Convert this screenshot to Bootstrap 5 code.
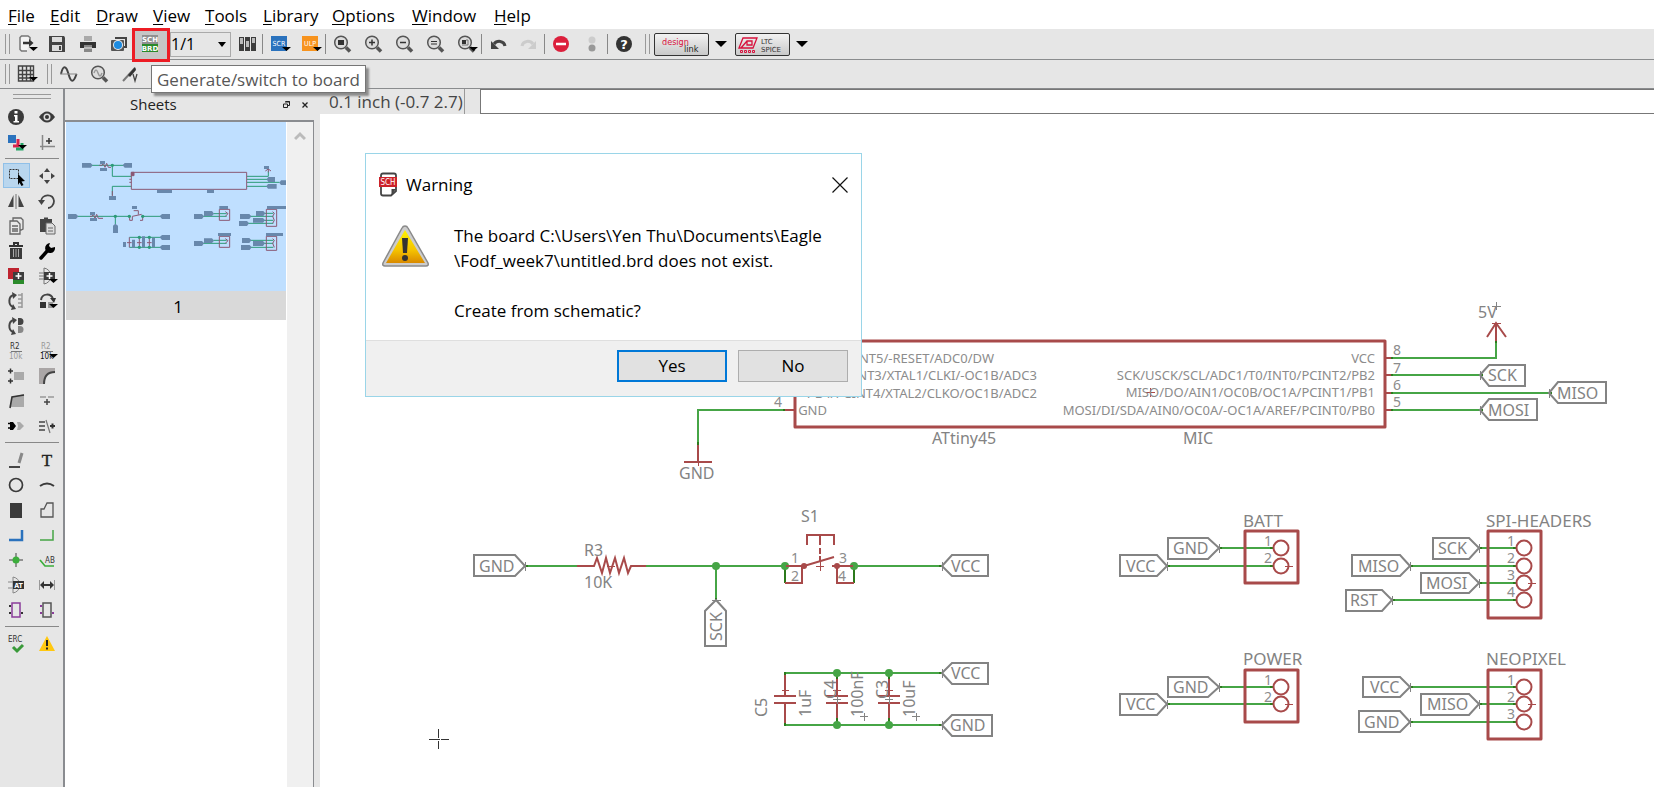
<!DOCTYPE html>
<html lang="en">
<head>
<meta charset="utf-8">
<meta name="viewport" content="width=device-width, initial-scale=1">
<title>Schematic editor</title>
<link href="https://cdn.jsdelivr.net/npm/bootstrap@5.3.0/dist/css/bootstrap.min.css" rel="stylesheet">
<style>
  :root { --chrome:#e6e6e6; --rule:#8a8c8e; --ink:#404040; --net:#46a546; --part:#a84a4a; --label:#838383; }
  body { font:17px/24px "Open Sans","Noto Sans",sans-serif; color:#000; background:#fff; }
  svg { display:block; }
  .menu-row { height:29px; padding:2px 0 0 8px; display:grid; grid-template-columns:42px 46px 57px 52px 58px 69px 80px 82px auto; justify-content:start; align-items:center; }
  .menu-row a { color:#000; text-decoration:none; }
  .menu-row u { text-underline-offset:2px; }
  .tool-row { background:var(--chrome); border-bottom:1px solid var(--rule); height:31px; padding-left:5px; }
  .tool-row.second { height:29px; }
  .tool { border:0; background:none; padding:0; width:31px; height:25px; display:flex; align-items:center; justify-content:center; position:relative; flex:none; color:var(--ink); }
  .grip { width:5px; height:20px; border:solid #999; border-width:0 1px; flex:none; }
  .grip.gap { margin-left:6px; }
  .vsep { width:1px; height:20px; background:#888; flex:none; }
  .tool.hot::before { content:""; position:absolute; inset:-4px -5px -5px -2px; background:#c6c6c6; border:3px solid #ed1c24; z-index:2; }
  .tool.hot svg { position:relative; z-index:3; }
  .tip { position:absolute; left:17px; top:33px; z-index:5; background:#fff; border:1px solid #767676; box-shadow:3px 3px 2px #8c8c8c; color:#575757; white-space:nowrap; padding:0 5px; height:28px; line-height:28px; }
  .sheet-pick { position:relative; margin-left:5px; width:61px; height:25px; flex:none; }
  .sheet-pick select { appearance:none; width:100%; height:100%; border:1px solid #aaa; background:var(--chrome); font-size:16px; line-height:22px; padding:0; border-radius:0; color:#000; }
  .sheet-pick::after, .drop { content:""; width:0; height:0; border:6px solid transparent; border-bottom:0; border-top-color:#000; }
  .sheet-pick::after { position:absolute; right:5px; top:10px; border-width:5px 4px 0; pointer-events:none; }
  .drop { padding:0; background:none; margin:0 8px 0 6px; flex:none; }
  .brandbtn { width:55px; height:23px; border:1px solid #333; border-radius:2px; background:linear-gradient(#f2f2f2,#c9c9c9); padding:0; flex:none; }
  .workspace { display:flex; height:calc(100vh - 89px); min-height:560px; }
  .palette { width:65px; background:var(--chrome); border-right:2px solid #8a8c90; flex:none; padding-top:5px; }
  .palette .pgrip { height:5px; width:38px; border:solid #999; border-width:1px 0; margin:0 auto 5px 13px; }
  .palette .pair { display:flex; }
  .palette hr { margin:4px 4px 4px 5px; border:0; height:1px; background:#888; opacity:1; }
  .palette .on { background:#b9d6ee; outline:1px solid #90c0e8; outline-offset:-1px; width:27px; margin:0 1px 0 3px; }
  .sheets { width:249px; background:var(--chrome); flex:none; display:flex; flex-direction:column; }
  .sheets h2 { font-size:15px; line-height:31px; margin:0; color:#222; font-weight:400; height:31px; display:flex; align-items:center; padding-left:65px; }
  .sheets h2 button { border:0; background:none; padding:0; width:18px; height:16px; display:flex; align-items:center; justify-content:center; }
  .sheets-list { flex:1; background:#fff; border-top:2px solid #8a8c90; border-right:1px solid #8a8c90; display:flex; }
  .thumb { width:220px; margin:0 1px; }
  .thumb figcaption { background:#d9d9d9; height:29px; line-height:32px; padding-left:4px; text-align:center; }
  .scroller { flex:1; background:#f0f0f0; padding-top:9px; display:flex; justify-content:center; align-items:start; }
  .editor { flex:1; min-width:0; background:#fff; display:flex; flex-direction:column; position:relative; }
  .gutter { width:6px; background:var(--chrome); flex:none; }
  .cmd { background:var(--chrome); height:25px; display:flex; }
  .coord { width:145px; border-right:1px solid #999; line-height:25px; padding-left:9px; color:#444; white-space:nowrap; flex:none; }
  .cmd input { flex:1; margin-left:15px; border:1px solid #777; border-right:0; border-radius:0; background:#fff; min-width:0; padding:0 4px; height:25px; }
  .sheet-area { flex:1; min-height:0; overflow:hidden; }
  .sheet-area svg { width:100%; height:100%; font-family:"Noto Sans",sans-serif; }
  .net { stroke:var(--net); stroke-width:2; fill:none; }
  .joint { fill:var(--net); stroke:none; }
  .end { stroke:#2c7a1c; stroke-width:2; fill:none; }
  .sym { stroke:var(--part); stroke-width:2; fill:none; }
  .box { stroke:var(--part); stroke-width:3; fill:none; stroke-linejoin:round; }
  .fine { stroke:var(--part); stroke-width:1; fill:none; }
  .finegray { stroke:var(--label); stroke-width:1; fill:none; }
  .tagline { stroke:var(--label); stroke-width:2; fill:none; }
  .t13 { font-size:13px; fill:#8c8c8c; } .t14 { font-size:14px; fill:#8c8c8c; } .t16 { font-size:16px; fill:var(--label); } .t17 { font-size:17px; fill:var(--label); }
  .warnbox { position:absolute; left:45px; top:64px; width:497px; background:#fff; border:1px solid #9ad5e8; z-index:4; }
  .warnbox header { height:61px; padding:0 13px 0 12px; }
  .warnbox .copy { padding:8px 12px 0 15px; gap:23px; height:125px; }
  .warnbox p { margin:0; line-height:25px; }
  .warnbox footer { background:#f0f0f0; border-top:1px solid #dfdfdf; height:56px; padding:0 13px 5px 0; gap:11px; }
  .choice { width:110px; height:32px; background:#e1e1e1; border:1px solid #adadad; padding:0; line-height:28px; color:#000; }
  .choice.main { border:2px solid #0078d7; }
</style>
</head>
<body>
<svg width="0" height="0" class="position-absolute" aria-hidden="true">
  <symbol id="dd" viewBox="0 0 24 24"><path d="M13 15h9l-4.500 4z" fill="#000"/></symbol>
  <symbol id="lens" viewBox="0 0 24 24"><circle cx="11" cy="10.500" r="6.300" fill="#ddd" stroke="#555" stroke-width="1.500"/><path d="M16 15.500l4 4" stroke="#555" stroke-width="3.500"/></symbol>
</svg>

<nav class="menu-row" aria-label="Main menu">
  <a href="#"><u>F</u>ile</a><a href="#"><u>E</u>dit</a><a href="#"><u>D</u>raw</a><a href="#"><u>V</u>iew</a><a href="#"><u>T</u>ools</a><a href="#"><u>L</u>ibrary</a><a href="#"><u>O</u>ptions</a><a href="#"><u>W</u>indow</a><a href="#"><u>H</u>elp</a>
</nav>

<div class="tool-row d-flex align-items-center" role="toolbar" aria-label="Actions">
  <span class="grip"></span>
  <button class="tool" aria-label="Open"><svg width="24" height="24"><path d="M16 8V5.500L14 4H7.500L6 5.500v12L7.500 19H13" fill="#f4f4f4" stroke="#777" stroke-width="1.500"/><path d="M9 11h7" stroke="#333" stroke-width="2.500"/><path d="M15 7l4.500 4-4.500 4z" fill="#333"/><use href="#dd" x="2"/></svg></button>
  <button class="tool" aria-label="Save"><svg width="24" height="24"><path d="M4 4h15l1 1.500V20H4z" fill="#444"/><path d="M7 5h10v5H7zM7 13h10v6H7z" fill="#ddd"/><path d="M14 14h2v4h-2z" fill="#444"/></svg></button>
  <button class="tool" aria-label="Print"><svg width="24" height="24"><path d="M8 4h8v5H8z" fill="#aaa"/><path d="M4 10h16v6H4z" fill="#333"/><path d="M8 13h8v7H8z" fill="#888"/><path d="M8 16h8" stroke="#eee"/></svg></button>
  <button class="tool" aria-label="Export image"><svg width="24" height="24"><path d="M8 6h11v9h-2" fill="none" stroke="#444" stroke-width="2"/><rect x="4" y="8" width="13" height="11" rx="1" fill="#555"/><circle cx="11" cy="13" r="5" fill="#eee"/><circle cx="11" cy="13" r="4" fill="#1d8be0"/></svg></button>
  <button class="tool hot" aria-label="Generate/switch to board" aria-describedby="tip1"><svg width="24" height="24" font-family="DejaVu Sans" font-weight="bold" font-size="7" text-anchor="middle" fill="#fff"><path d="M4 3h16v9H4z" fill="#909090"/><path d="M4 12h16v8H4z" fill="#2a8a2a"/><text x="12" y="10">SCH</text><text x="12" y="19">BRD</text></svg><span class="tip" id="tip1" role="tooltip">Generate/switch to board</span></button>
  <div class="sheet-pick"><select aria-label="Sheet"><option>1/1</option></select></div>
  <button class="tool" aria-label="Manage sheets"><svg width="24" height="24"><path d="M4 5h5v14H4zM10 5h5v14h-5zM16 5h5v14h-5z" fill="#3c3c3c"/><path d="M5 6h3v6H5zM11 9h3v6h-3zM17 6h3v5h-3z" fill="#bbb"/></svg></button>
  <span class="vsep"></span>
  <button class="tool" aria-label="Run script"><svg width="24" height="24"><path d="M4 4h16v15H4z" fill="#2a72bd"/><text x="12" y="14" font-family="DejaVu Sans Condensed" font-size="7" text-anchor="middle" fill="#fff">SCR</text><use href="#dd" x="2"/></svg></button>
  <button class="tool" aria-label="Run ULP"><svg width="24" height="24"><path d="M4 4h16v15H4z" fill="#f7931e"/><text x="12" y="14" font-family="DejaVu Sans Condensed" font-size="7" text-anchor="middle" fill="#fff">ULP</text><use href="#dd" x="2"/></svg></button>
  <span class="vsep"></span>
  <button class="tool" aria-label="Zoom to fit"><svg width="24" height="24"><use href="#lens"/><path d="M8 8h6v5H8z" fill="#333"/></svg></button>
  <button class="tool" aria-label="Zoom in"><svg width="24" height="24"><use href="#lens"/><path d="M8 10.500h6M11 7.500v6" stroke="#333" stroke-width="1.500"/></svg></button>
  <button class="tool" aria-label="Zoom out"><svg width="24" height="24"><use href="#lens"/><path d="M8 10.500h6" stroke="#333" stroke-width="1.500"/></svg></button>
  <button class="tool" aria-label="Redraw"><svg width="24" height="24"><use href="#lens"/><path d="M8 9.500h6M8 12h6" stroke="#333" stroke-width="1.200"/></svg></button>
  <button class="tool" aria-label="Zoom select"><svg width="24" height="24"><use href="#lens"/><path d="M8 8h4v4H8z" fill="#333"/><path d="M12 8h2v5H8" fill="none" stroke="#777"/><use href="#dd" x="2"/></svg></button>
  <span class="vsep"></span>
  <button class="tool" aria-label="Undo"><svg width="24" height="24"><path d="M19 14C18 8.500 11 8 8 12" fill="none" stroke="#444" stroke-width="3"/><path d="M5 9v8h8z" fill="#444"/></svg></button>
  <button class="tool" aria-label="Redo"><svg width="24" height="24"><path d="M5 14C6 8.500 13 8 16 12" fill="none" stroke="#ccc" stroke-width="3"/><path d="M19 9v8h-8z" fill="#ccc"/></svg></button>
  <span class="vsep"></span>
  <button class="tool" aria-label="Stop"><svg width="24" height="24"><circle cx="12" cy="12" r="8" fill="#dc1f3c"/><path d="M7 12h10" stroke="#fff" stroke-width="2.500"/></svg></button>
  <button class="tool" aria-label="Go"><svg width="24" height="24"><circle cx="12" cy="8" r="3.500" fill="#ccc"/><circle cx="12" cy="16" r="3.500" fill="#999"/></svg></button>
  <span class="vsep"></span>
  <button class="tool" aria-label="Help"><svg width="24" height="24"><circle cx="12" cy="12" r="8" fill="#333"/><text x="12" y="17" font-family="DejaVu Sans" font-weight="bold" font-size="13" text-anchor="middle" fill="#fff">?</text></svg></button>
  <span class="grip gap me-1"></span>
  <button class="brandbtn" aria-label="Design link"><svg width="53" height="21" font-family="DejaVu Sans Condensed" font-size="10"><text x="7" y="11" fill="#d8103c" font-size="9">design</text><text x="29" y="18" fill="#222" font-size="9">link</text></svg></button>
  <button class="drop" aria-label="Design link menu"></button>
  <button class="brandbtn" aria-label="LTC Spice"><svg width="53" height="21"><path d="M3 14L7 4h14l-4 10zM5 14l6-7h5v4h-5V7" fill="none" stroke="#d8103c" stroke-width="1.300"/><path d="M4.500 16.500h2v2h-2zM8.500 16.500h2v2h-2zM12.500 16.500h2v2h-2zM16.500 16.500h2v2h-2z" fill="none" stroke="#d8103c"/><g font-family="DejaVu Sans" font-size="7" fill="#333"><text x="25" y="10">LTC</text><text x="25" y="18">SPICE</text></g></svg></button>
  <button class="drop" aria-label="LTC Spice menu"></button>
</div>

<div class="tool-row second d-flex align-items-center" role="toolbar" aria-label="Parameters">
  <span class="grip"></span>
  <button class="tool" aria-label="Grid"><svg width="24" height="24"><path d="M4.500 4h15v15h-15zM8.500 4v15M12.500 4v15M16.500 4v15M4 8.500h15M4 12.500h15M4 16h15" fill="none" stroke="#444" stroke-width="1.400"/><use href="#dd" x="2"/></svg></button>
  <span class="grip gap"></span>
  <button class="tool" aria-label="Simulate"><svg width="24" height="24"><path d="M5 12C7 3 10 3 12.500 12s5 9 8 0" fill="none" stroke="#444" stroke-width="2"/><path d="M4 12h17" stroke="#888"/></svg></button>
  <button class="tool" aria-label="Probe"><svg width="24" height="24"><use href="#lens"/><path d="M7 11q2-6 4 0t4 0" fill="none" stroke="#999" stroke-width="1.500"/></svg></button>
  <button class="tool" aria-label="Voltage probe"><svg width="24" height="24"><path d="M5 19L17 6" stroke="#777" stroke-width="2"/><path d="M10 13l7-8 1 3-6 7z" fill="#333"/><path d="M15 12l2 7 2-7" fill="none" stroke="#444" stroke-width="1.300"/></svg></button>
</div>

<main class="workspace">
  <aside class="palette" aria-label="Tools">
    <div class="pgrip"></div>
    <div class="pair">
      <button class="tool" aria-label="Info"><svg width="24" height="24"><circle cx="12" cy="12" r="8" fill="#3a3a3a"/><path d="M10 10h3.500v6H15v1.500H9.500V16H11v-4.500H10zM10.500 6h3v2.500h-3z" fill="#fff"/></svg></button>
      <button class="tool" aria-label="Show"><svg width="24" height="24"><path d="M4 12q8-11 16 0-8 11-16 0z" fill="#3a3a3a"/><circle cx="12" cy="12" r="3.500" fill="#ddd"/><circle cx="12" cy="12" r="2" fill="#333"/></svg></button>
    </div>
    <div class="pair">
      <button class="tool" aria-label="Layers"><svg width="24" height="24"><path d="M4 5h8v8H4z" fill="#2a72bd"/><path d="M14 9v7H9" fill="none" stroke="#d8234c" stroke-width="3"/><path d="M18 13v6h-6" fill="none" stroke="#23a565" stroke-width="3"/><use href="#dd" x="1"/></svg></button>
      <button class="tool" aria-label="Mark"><svg width="24" height="24"><path d="M7.500 5v15M5 16.500h15" stroke="#888" stroke-width="1.500"/><path d="M14 8v6M11 11h6" stroke="#333" stroke-width="1.500"/></svg></button>
    </div>
    <hr>
    <div class="pair">
      <button class="tool on" aria-label="Group"><svg width="24" height="24"><rect x="4.500" y="5.500" width="9" height="9" fill="none" stroke="#333" stroke-dasharray="2 1"/><path d="M13 10l7 7-3.500.500 2 3.500-2 1-2-3.500L13 21z" fill="#000"/></svg></button>
      <button class="tool" aria-label="Move"><svg width="24" height="24" fill="#444"><path d="M12 4l3 4H9zM12 20l3-4H9zM4 12l4-3v6zM20 12l-4-3v6z"/></svg></button>
    </div>
    <div class="pair">
      <button class="tool" aria-label="Mirror"><svg width="24" height="24"><path d="M9.500 6v12H4zM14.500 6v12H20z" fill="#444"/><path d="M12 5v15" stroke="#999" stroke-width="1.500"/></svg></button>
      <button class="tool" aria-label="Rotate"><svg width="24" height="24"><path d="M6 12c1-7 12-8 13 0 0 4-3 7-6 7" fill="none" stroke="#444" stroke-width="1.800"/><path d="M3 11h7l-3.500 5z" fill="#444"/></svg></button>
    </div>
    <div class="pair">
      <button class="tool" aria-label="Copy"><svg width="24" height="24" fill="#e8e8e8" stroke="#666" stroke-width="1.300"><path d="M9 4h8l2 2v9l-2 1H9z"/><path d="M6 7h7l3 3v10H6z"/><path d="M8 12h6M8 15h6M8 17h6"/></svg></button>
      <button class="tool" aria-label="Paste"><svg width="24" height="24"><path d="M5 5h12v13H5zM9 3.500h4v2H9z" fill="#444"/><path d="M11 9h6l3 3v8h-9z" fill="#ddd" stroke="#666"/><path d="M13 14h5M13 17h5" stroke="#666"/></svg></button>
    </div>
    <div class="pair">
      <button class="tool" aria-label="Delete"><svg width="24" height="24"><path d="M10 6V4h4v2M5 7h14" fill="none" stroke="#333" stroke-width="2"/><path d="M6 9h12v11H6z" fill="#3a3a3a"/><path d="M9.500 10v8M12 10v8M14.500 10v8" stroke="#aaa"/></svg></button>
      <button class="tool" aria-label="Change"><svg width="24" height="24"><path d="M6 19l8-9" stroke="#000" stroke-width="3.500" stroke-linecap="round"/><path d="M20 8a5 5 0 1 1-5-4l-1 3 2 2z" fill="#000"/></svg></button>
    </div>
    <div class="pair">
      <button class="tool" aria-label="Add"><svg width="24" height="24"><path d="M4 4h11v11H4z" fill="#be2430"/><path d="M9 14h11v6H9z" fill="#2a8a2a"/><path d="M9 8h11v8H9z" fill="#3c3c3c"/><path d="M14.500 9v6M11.500 12h6" stroke="#fff" stroke-width="1.500"/></svg></button>
      <button class="tool" aria-label="Pinswap"><svg width="24" height="24"><path d="M9 4q6 1 7 8-1 7-7 8zM4 9h5M4 15h5M4 12h15" fill="none" stroke="#777"/><path d="M9 8h11v8H9z" fill="#3c3c3c"/><path d="M14.500 9v6M11.500 12h6" stroke="#fff" stroke-width="1.500"/><use href="#dd" x="1"/></svg></button>
    </div>
    <div class="pair">
      <button class="tool" aria-label="Replace"><svg width="24" height="24"><path d="M10 6c-6 1-6 10-1 12" fill="none" stroke="#444" stroke-width="2"/><path d="M8 3l5 3-4 4zM7 21l5-1-3-5z" fill="#444"/><path d="M18 4v15M14 6h4M14 10h4M14 14h4M14 18h4" fill="none" stroke="#999" stroke-width="1.500"/></svg></button>
      <button class="tool" aria-label="Gateswap"><svg width="24" height="24"><path d="M6 11c1-7 10-7 12-1" fill="none" stroke="#444" stroke-width="2"/><path d="M15 9h6l-2 5zM5 13h6v6H5z" fill="#333"/><path d="M13 13h5v6h-5z" fill="#999"/><use href="#dd" x="1"/></svg></button>
    </div>
    <div class="pair">
      <button class="tool" aria-label="Swap gates"><svg width="24" height="24"><path d="M10 6c-6 1-6 10-1 12" fill="none" stroke="#444" stroke-width="2"/><path d="M8 3l5 3-4 4zM7 21l5-1-3-5z" fill="#444"/><path d="M14 4h2a3.500 3.500 0 0 1 0 7h-2z" fill="#444"/><path d="M14 12h2a3.500 3.500 0 0 1 0 7h-2z" fill="#888"/></svg></button>
    </div>
    <div class="pair">
      <button class="tool" aria-label="Name"><svg width="24" height="24" font-family="DejaVu Sans Condensed" font-size="8"><text x="6" y="10" fill="#333">R2</text><path d="M7 12.500h11" stroke="#777"/><text x="5" y="20" fill="#999">10k</text></svg></button>
      <button class="tool" aria-label="Value"><svg width="24" height="24" font-family="DejaVu Sans Condensed" font-size="8"><text x="6" y="10" fill="#999">R2</text><path d="M7 12.500h11" stroke="#777"/><text x="5" y="20" fill="#111">10k</text><use href="#dd" x="1"/></svg></button>
    </div>
    <div class="pair">
      <button class="tool" aria-label="Smash"><svg width="24" height="24"><path d="M10 8h10v8H10z" fill="#aaa"/><path d="M4 7h5M6.500 4.500v5M4 17h5M6.500 14.500v5" stroke="#333" stroke-width="1.500"/></svg></button>
      <button class="tool" aria-label="Miter"><svg width="24" height="24"><path d="M4 4h16v4Q9 8 9 20H4z" fill="#aaa6a6"/><path d="M9 20Q9 8 20 8" fill="none" stroke="#444" stroke-width="2"/></svg></button>
    </div>
    <div class="pair">
      <button class="tool" aria-label="Split"><svg width="24" height="24"><path d="M8 8l12-3v13H6z" fill="#aaa"/><path d="M6 19l2-11 12-2" fill="none" stroke="#333" stroke-width="1.600"/></svg></button>
      <button class="tool" aria-label="Optimize"><svg width="24" height="24"><path d="M5 8h6M13 8h6" stroke="#999" stroke-width="1.500"/><path d="M12 10v6M9 13h6" stroke="#444" stroke-width="1.500"/></svg></button>
    </div>
    <div class="pair">
      <button class="tool" aria-label="Invoke"><svg width="24" height="24"><path d="M4 9.500h3M4 14h3" stroke="#000" stroke-width="1.500"/><path d="M6 8h3l3 4-3 4H6z" fill="#000"/><path d="M13 8h3l4 4-4 4h-3l1-4z" fill="#aaa"/></svg></button>
      <button class="tool" aria-label="Cut net"><svg width="24" height="24"><path d="M4 8h6M4 12h6M4 16h6" stroke="#444" stroke-width="1.500"/><path d="M11 6l4 13" stroke="#777" stroke-width="1.200"/><path d="M15 12h5M17.500 9.500v5" stroke="#333" stroke-width="2"/></svg></button>
    </div>
    <hr>
    <div class="pair">
      <button class="tool" aria-label="Line"><svg width="24" height="24"><path d="M5 19h11" stroke="#111" stroke-width="1.500"/><path d="M18 5l-3 10" stroke="#888" stroke-width="3"/></svg></button>
      <button class="tool" aria-label="Text"><svg width="24" height="24"><text x="12" y="18" font-family="Liberation Serif" font-size="17" text-anchor="middle" fill="#222" stroke="#222" stroke-width=".400">T</text></svg></button>
    </div>
    <div class="pair">
      <button class="tool" aria-label="Circle"><svg width="24" height="24"><circle cx="12" cy="12" r="6.500" fill="none" stroke="#3a3a3a" stroke-width="1.700"/></svg></button>
      <button class="tool" aria-label="Arc"><svg width="24" height="24"><path d="M5 13q7-5 14 0" fill="none" stroke="#3a3a3a" stroke-width="2"/></svg></button>
    </div>
    <div class="pair">
      <button class="tool" aria-label="Rectangle"><svg width="24" height="24"><path d="M6 5h12v15H6z" fill="#3a3a3a"/></svg></button>
      <button class="tool" aria-label="Polygon"><svg width="24" height="24"><path d="M12 5h6v14H6v-8h3z" fill="none" stroke="#555" stroke-width="1.300"/></svg></button>
    </div>
    <div class="pair">
      <button class="tool" aria-label="Bus"><svg width="24" height="24"><path d="M5 17h13V7" fill="none" stroke="#2a72bd" stroke-width="2.500"/></svg></button>
      <button class="tool" aria-label="Net"><svg width="24" height="24"><path d="M5 17h13V7" fill="none" stroke="#46a546" stroke-width="1.500"/></svg></button>
    </div>
    <div class="pair">
      <button class="tool" aria-label="Junction"><svg width="24" height="24"><path d="M5 12h14M12 5v14" stroke="#777" stroke-width="1.500"/><circle cx="12" cy="12" r="3.500" fill="#3cae3c"/></svg></button>
      <button class="tool" aria-label="Label"><svg width="24" height="24"><text x="10" y="15" font-family="DejaVu Sans Condensed" font-size="8" fill="#333">AB</text><path d="M5 12l5 6h9" fill="none" stroke="#3cae3c" stroke-width="1.700"/></svg></button>
    </div>
    <div class="pair">
      <button class="tool" aria-label="Attribute"><svg width="24" height="24"><path d="M9 4q6 1 7 8-1 7-7 8zM4 9h5M4 15h5" fill="none" stroke="#888"/><path d="M9 8h11v8H9z" fill="#333"/><text x="14.500" y="15" font-family="DejaVu Sans Condensed" font-weight="bold" font-size="7" text-anchor="middle" fill="#fff">AT</text></svg></button>
      <button class="tool" aria-label="Dimension"><svg width="24" height="24"><path d="M4.500 7v10M19.500 7v10" stroke="#999"/><path d="M6 12h12" stroke="#333" stroke-width="2"/><path d="M5 12l4-4v8zM19 12l-4-4v8z" fill="#333"/></svg></button>
    </div>
    <div class="pair">
      <button class="tool" aria-label="Module"><svg width="24" height="24"><path d="M8 5h8v14H8z" fill="none" stroke="#8a3c9a" stroke-width="1.500"/><path d="M5 8h2M5 15h2M17 15h2" stroke="#333" stroke-width="2"/></svg></button>
      <button class="tool" aria-label="Port"><svg width="24" height="24"><path d="M8 5h8v14H8z" fill="none" stroke="#555" stroke-width="1.500"/><path d="M5 8h2M5 15h2M17 15h2" stroke="#8a3c9a" stroke-width="2"/></svg></button>
    </div>
    <hr>
    <div class="pair">
      <button class="tool" aria-label="ERC"><svg width="24" height="24"><text x="4" y="10" font-family="DejaVu Sans Condensed" font-size="8" fill="#333">ERC</text><path d="M9 15l4 4 6-6" fill="none" stroke="#3a9a3a" stroke-width="3"/></svg></button>
      <button class="tool" aria-label="Errors"><svg width="24" height="24"><path d="M12 4l8 15H4z" fill="#ffc810"/><path d="M12 8v6M12 15.500v2" stroke="#222" stroke-width="2"/></svg></button>
    </div>
  </aside>

  <section class="sheets" aria-label="Sheets">
    <h2><span class="me-auto">Sheets</span><button aria-label="Float"><svg width="8" height="8"><path d="M2.500.500h4v4h-2M.500 3h4v3.500h-4zM2 1h5" fill="none" stroke="#222"/></svg></button><button aria-label="Close panel"><svg width="8" height="8"><path d="M1.500 1.500l5 5M6.500 1.500l-5 5" stroke="#222" stroke-width="1.300"/></svg></button></h2>
    <div class="sheets-list">
      <figure class="thumb">
        <svg width="220" height="169" viewBox="198 111 660 507" aria-label="Sheet preview">
          <path d="M198 111h660v507H198z" fill="#bfdfff"/>
          <g fill="none" stroke="#2c9a78" stroke-width="3"><path d="M272 241h100M337 241v33h57M337 331v-27h57M741 274h64v-15M741 283h62M741 292h98M741 304h62M234 394h155M346 394v24M428 394h55M388 457h95M388 487h95M640 386h40M608 394h72M640 466h40M608 475h72M795 385h25M752 394h68M790 406h30M744 415h76M752 466h68M790 475h30M752 487h68"/></g>
          <g fill="none" stroke="#8a5874" stroke-width="3"><path d="M394 262h346v51H394zM298 241h8l4-6 5 12 5-12 5 12h8M337 318v17M388 283h6M388 292h6M796 258l9-6 8 6M805 248v14M270 394h6l4-6 5 12 5-12 5 12h14M389 394v12h8v-12l28-6M401 377h14v12M428 394v12h-8M388 457v30M418 457v30M448 457v30M381 473h14M411 473h14M441 473h14M658 373h31v33h-31zM658 454h31v33h-31zM799 373h31v51h-31zM799 454h31v42h-31zM676 380l8 6-8 8M676 461l8 6-8 8M818 380l5 5-5 9 5 12-5 9M818 461l5 5-5 9 5 12"/><path d="M394 262h8v10h-8z" fill="#8a5874"/></g>
          <g fill="#6888ac"><path d="M246 234h26l6 7-6 7h-26zM396 234h-22l-6 7 6 7h22zM300 228h15v9h-15zM300 249h21v9h-21zM327 333h21v12h-21zM471 314h45v10h-45zM621 314h21v10h-21zM792 243h15v9h-15zM825 276h-20l-5 7 5 8h20zM858 286h-15l-5 7 5 7h15zM830 297h-26l-5 7 5 7h26zM204 387h24l7 7-7 8h-24zM270 381h15v9h-15zM270 399h21v9h-21zM339 444v-22l7-6 8 6v22zM396 363h15v9h-15zM510 387h-24l-7 7 7 8h24zM510 450h-24l-7 7 7 8h24zM510 480h-24l-7 7 7 8h24zM369 471h9v15h-9zM396 464h9v24h-9zM426 454h9v33h-9zM456 458h9v29h-9zM658 363h26v9h-26zM612 378h24l6 8-6 7h-24zM582 387h24l6 7-6 8h-24zM654 444h39v9h-39zM612 460h24l6 7-6 7h-24zM582 468h24l6 7-6 8h-24zM801 363h57v9h-57zM768 378h22l6 7-6 8h-22zM720 387h28l6 7-6 8h-28zM759 399h30l6 7-6 7h-30zM717 408h24l6 7-6 8h-24zM798 444h51v9h-51zM726 459h22l6 7-6 8h-22zM759 468h30l6 7-6 8h-30zM723 480h26l6 7-6 8h-26z"/></g>
          <g fill="#2c9a78"><circle cx="337" cy="241" r="5"/><circle cx="346" cy="394" r="5"/><circle cx="388" cy="394" r="5"/><circle cx="428" cy="394" r="5"/><circle cx="418" cy="457" r="5"/><circle cx="448" cy="457" r="5"/><circle cx="418" cy="487" r="5"/><circle cx="448" cy="487" r="5"/></g>
        </svg>
        <figcaption>1</figcaption>
      </figure>
      <div class="scroller"><svg width="12" height="10"><path d="M1 8l5-5 5 5" fill="none" stroke="#bbb" stroke-width="3"/></svg></div>
    </div>
  </section>
  <div class="gutter"></div>

  <section class="editor" aria-label="Schematic">
    <div class="cmd"><span class="coord">0.1 inch (-0.7 2.7)</span><input type="text" aria-label="Command line"></div>
    <div class="sheet-area">
      <svg role="img" aria-label="Schematic sheet"><g transform="translate(-320 -114)">
        <!-- nets -->
        <path class="net" d="M785 410h-87v34M1391 358h105v-17M1391 375h89M1391 393h158M1391 410h89M525 566h52M646 566h139M716 566v34M854 566h88M785 673h157M785 725h157M1219 548h54M1167 566h106M1219 687h54M1167 704h106M1479 548h37M1410 566h106M1479 583h37M1392 600h124M1410 687h106M1479 704h37M1410 722h106"/>
        <path class="end" d="M785 566v17M854 566v17M698 442v3M783 410h4M1390 358h3M1390 375h3M1390 393h3M1390 410h3M1496 340v3M1480 375h3M1549 393h3M1480 410h3M939 566h3M939 673h3M939 725h3M716 598v3M525 566h3M1219 548h3M1167 566h3M1219 687h3M1167 704h3M1479 548h3M1410 566h3M1479 583h3M1392 600h3M1410 687h3M1479 704h3M1410 722h3M785 672v3M785 723v3M837 673v6M889 673v6M837 718v7M889 718v7M1270 548h3M1270 566h3M1270 687h3M1270 704h3M1513 548h3M1513 566h3M1513 583h3M1513 600h3M1513 687h3M1513 704h3M1513 722h3"/>
        <g class="joint"><circle cx="716" cy="566" r="4"/><circle cx="785" cy="566" r="4"/><circle cx="854" cy="566" r="4"/><circle cx="837" cy="673" r="4"/><circle cx="889" cy="673" r="4"/><circle cx="837" cy="725" r="4"/><circle cx="889" cy="725" r="4"/></g>
        <!-- parts -->
        <rect class="box" x="795" y="341" width="590" height="86"/>
        <rect class="box" x="1245" y="531" width="53" height="52"/><rect class="box" x="1245" y="670" width="53" height="52"/>
        <rect class="box" x="1488" y="531" width="53" height="87"/><rect class="box" x="1488" y="670" width="53" height="69"/>
        <path class="sym" d="M785 410h10M1385 358h6M1385 375h6M1385 393h6M1385 410h6M698 445v17M684 462h28M1496 341v-18M1487 337l9-14 10 14M577 566h17l3-8 5 15 4-15 4 15 5-15 4 15 5-15 4 15 3-7h15M786 566h18l30-9M785 583h17v-17M807 545v-10h27v10M820 535v10M820 548v6M820 556v6M832 566h21M837 566v17h17M785 675v21M774 696h22M774 703h22M785 703v20M837 679v17M826 696h22M826 703h22M837 703v15M889 679v17M878 696h22M878 703h22M889 703v15"/>
        <g fill="#a84a4a"><circle cx="804" cy="566" r="3"/><circle cx="837" cy="566" r="3"/></g>
        <g class="sym"><circle cx="1281" cy="548" r="7.500"/><circle cx="1281" cy="566" r="7.500"/><circle cx="1281" cy="687" r="7.500"/><circle cx="1281" cy="704" r="7.500"/><circle cx="1524" cy="548" r="7.500"/><circle cx="1524" cy="566" r="7.500"/><circle cx="1524" cy="583" r="7.500"/><circle cx="1524" cy="600" r="7.500"/><circle cx="1524" cy="687" r="7.500"/><circle cx="1524" cy="704" r="7.500"/><circle cx="1524" cy="722" r="7.500"/></g>
        <path class="fine" d="M698.500 462v4M1492 323.500h9M1146 392.500h9M1150.500 388v9M816 566.500h8M820.500 562v9M782 690.500h7M833 690.500h8M885 690.500h8M607 566.500h8M1285 566.500h8M1285 704.500h8M1528 583.500h8M1528 704.500h8M785.500 687v7"/>
        <path class="finegray" d="M1492 306.500h9M1496.500 302v8M833 699.500h8M837.500 696v8M885 699.500h8M889.500 696v8M860 716.500h8M864.500 713v8M912 716.500h8M916.500 713v8"/>
        <path d="M429 739.500h20M438.500 729v20" stroke="#333" stroke-width="1" stroke-dasharray="9 1 1 1"/>
        <!-- net labels -->
        <g class="tagline">
          <path d="M1480 375l9-10h36v21h-36zM1549 393l9-11h48v21h-48zM1480 410l9-11h48v21h-48z"/>
          <path d="M525 566l-10-11h-41v21h41zM942 566l10-11h36v21h-36zM716 600l-11 11v35h21v-35zM942 673l10-10h36v21h-36zM942 725l10-10h40v21h-40z"/>
          <path d="M1219 548l-11-10h-40v21h40zM1167 566l-10-11h-37v21h37zM1219 687l-11-10h-40v20h40zM1167 704l-10-10h-37v21h37z"/>
          <path d="M1479 548l-10-10h-36v21h36zM1410 566l-10-11h-48v21h48zM1479 583l-10-10h-48v20h48zM1392 600l-10-10h-36v21h36zM1410 687l-10-10h-37v20h37zM1479 704l-10-10h-48v21h48zM1410 722l-10-11h-41v21h41z"/>
        </g>
        <path class="finegray" d="M1480.500 371v9M1549.500 389v9M1480.500 406v9M525.500 562v9M942.500 562v9M942.500 669v9M942.500 721v9M712 600.500h9M1219.500 544v9M1167.500 562v9M1219.500 683v9M1167.500 700v9M1479.500 544v9M1410.500 562v9M1479.500 579v9M1392.500 596v9M1410.500 683v9M1479.500 700v9M1410.500 718v9"/>
        <g class="t16">
          <text x="1488" y="381">SCK</text><text x="1557" y="399">MISO</text><text x="1488" y="416">MOSI</text>
          <text x="479" y="572">GND</text><text x="951" y="572">VCC</text><text x="951" y="679">VCC</text><text x="950" y="731">GND</text>
          <text transform="translate(722 641) rotate(-90)">SCK</text>
          <text x="1173" y="554">GND</text><text x="1126" y="572">VCC</text><text x="1173" y="693">GND</text><text x="1126" y="710">VCC</text>
          <text x="1438" y="554">SCK</text><text x="1358" y="572">MISO</text><text x="1426" y="589">MOSI</text><text x="1350" y="606">RST</text>
          <text x="1370" y="693">VCC</text><text x="1427" y="710">MISO</text><text x="1364" y="728">GND</text>
          <text x="679" y="479">GND</text><text x="1183" y="444">MIC</text>
          <text x="1478" y="318">5V</text><text x="932" y="444">ATtiny45</text>
          <text x="584" y="556">R3</text><text x="584" y="588">10K</text><text x="801" y="522">S1</text>
          <text transform="translate(767 717) rotate(-90)">C5</text><text transform="translate(811 717) rotate(-90)">1uF</text><text transform="translate(836 699) rotate(-90)">C4</text><text transform="translate(863 717) rotate(-90)">100nF</text><text transform="translate(888 699) rotate(-90)">C3</text><text transform="translate(915 717) rotate(-90)">10uF</text>
        </g>
        <g class="t17"><text x="1243" y="527">BATT</text><text x="1486" y="527">SPI-HEADERS</text><text x="1243" y="665">POWER</text><text x="1486" y="665">NEOPIXEL</text></g>
        <g class="t13" text-anchor="end">
          <text x="994" y="363">PB5/PCINT5/-RESET/ADC0/DW</text><text x="1037" y="380">PB3/PCINT3/XTAL1/CLKI/-OC1B/ADC3</text><text x="1037" y="398">PB4/PCINT4/XTAL2/CLKO/OC1B/ADC2</text><text x="827" y="415">GND</text>
          <text x="1375" y="363">VCC</text><text x="1375" y="380">SCK/USCK/SCL/ADC1/T0/INT0/PCINT2/PB2</text><text x="1375" y="397">MISO/DO/AIN1/OC0B/OC1A/PCINT1/PB1</text><text x="1375" y="415">MOSI/DI/SDA/AIN0/OC0A/-OC1A/AREF/PCINT0/PB0</text>
        </g>
        <g class="t14">
          <text x="774" y="407">4</text><text x="1393" y="355">8</text><text x="1393" y="373">7</text><text x="1393" y="390">6</text><text x="1393" y="407">5</text>
          <text x="791" y="563">1</text><text x="791" y="581">2</text><text x="839" y="563">3</text><text x="838" y="581">4</text>
          <text x="1264" y="546">1</text><text x="1264" y="563">2</text><text x="1264" y="685">1</text><text x="1264" y="702">2</text>
          <text x="1507" y="546">1</text><text x="1507" y="563">2</text><text x="1507" y="580">3</text><text x="1507" y="597">4</text>
          <text x="1507" y="685">1</text><text x="1507" y="702">2</text><text x="1507" y="719">3</text>
        </g>
      </g></svg>
    </div>

    <div class="warnbox" role="alertdialog" aria-labelledby="wt" aria-describedby="wm">
      <header class="d-flex align-items-center">
        <svg width="20" height="26"><path d="M5 1.500h11q2 0 2 2V19l-5 4.500H5q-2 0-2-2v-18q0-2 2-2z" fill="#fff" stroke="#444" stroke-width="1.800"/><path d="M18 17h-4.500v6z" fill="#444"/><path d="M1 5h18v10H1z" fill="#cc2229"/><text x="10" y="13" font-family="DejaVu Sans Condensed" font-size="8" text-anchor="middle" fill="#fff">SCH</text></svg>
        <span id="wt" class="me-auto ps-2">Warning</span>
        <button class="btn p-0 border-0" aria-label="Close"><svg width="16" height="16"><path d="M.500.500l15 15M15.500.500l-15 15" stroke="#111" stroke-width="1.200"/></svg></button>
      </header>
      <div class="copy d-flex">
        <svg width="50" height="46" viewBox="0 0 50 46" class="flex-shrink-0"><defs><linearGradient id="wg" x1="0" y1="0" x2="0" y2="1"><stop offset="0" stop-color="#fff200"/><stop offset=".600" stop-color="#f5c400"/><stop offset="1" stop-color="#d98a00"/></linearGradient></defs><path d="M24 3q2 0 3 2l20 35q1 3-2 3H4q-3 0-2-3L21 5q1-2 3-2z" fill="#ccc" stroke="#8a8a8a" stroke-width="1.500"/><path d="M24 7l20 33H5z" fill="url(#wg)"/><path d="M21 15h6l-1 15h-4z" fill="#333"/><circle cx="24" cy="35" r="3" fill="#333"/></svg>
        <p id="wm" class="text-nowrap">The board C:\Users\Yen Thu\Documents\Eagle<br>\Fodf_week7\untitled.brd does not exist.<br><br>Create from schematic?</p>
      </div>
      <footer class="d-flex align-items-center justify-content-end">
        <button class="choice main">Yes</button>
        <button class="choice">No</button>
      </footer>
    </div>
  </section>
</main>
<script src="https://cdn.jsdelivr.net/npm/bootstrap@5.3.0/dist/js/bootstrap.bundle.min.js"></script>
</body>
</html>
